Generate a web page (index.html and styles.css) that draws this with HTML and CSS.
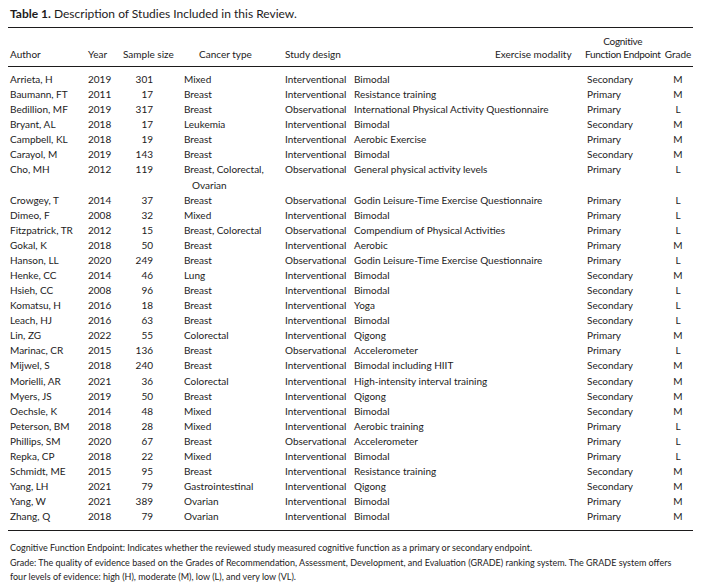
FILE: index.html
```html
<!DOCTYPE html>
<html lang="en">
<head>
<meta charset="utf-8">
<title>Table 1</title>
<link rel="stylesheet" href="styles.css">
</head>
<body>
<div class="doc">
  <div class="caption"><span class="label">Table 1.</span> Description of Studies Included in this Review.</div>
  <table class="studies">
    <colgroup>
      <col class="c-author"><col class="c-year"><col class="c-size"><col class="c-cancer"><col class="c-design"><col class="c-mod"><col class="c-end"><col class="c-grade">
    </colgroup>
    <thead>
      <tr>
        <th class="h-left">Author</th>
        <th class="h-left">Year</th>
        <th class="h-left">Sample size</th>
        <th class="h-cancer">Cancer type</th>
        <th class="h-left">Study design</th>
        <th class="h-mod">Exercise modality</th>
        <th class="h-end"><span class="stack">Cognitive<br>Function Endpoint</span></th>
        <th class="h-center">Grade</th>
      </tr>
    </thead>
    <tbody>
      <tr><td>Arrieta, H</td><td>2019</td><td class="num">301</td><td>Mixed</td><td>Interventional</td><td>Bimodal</td><td>Secondary</td><td class="grade">M</td></tr>
      <tr><td>Baumann, FT</td><td>2011</td><td class="num">17</td><td>Breast</td><td>Interventional</td><td>Resistance training</td><td>Primary</td><td class="grade">M</td></tr>
      <tr><td>Bedillion, MF</td><td>2019</td><td class="num">317</td><td>Breast</td><td>Observational</td><td>International Physical Activity Questionnaire</td><td>Primary</td><td class="grade">L</td></tr>
      <tr><td>Bryant, AL</td><td>2018</td><td class="num">17</td><td>Leukemia</td><td>Interventional</td><td>Bimodal</td><td>Secondary</td><td class="grade">M</td></tr>
      <tr><td>Campbell, KL</td><td>2018</td><td class="num">19</td><td>Breast</td><td>Interventional</td><td>Aerobic Exercise</td><td>Primary</td><td class="grade">M</td></tr>
      <tr><td>Carayol, M</td><td>2019</td><td class="num">143</td><td>Breast</td><td>Interventional</td><td>Bimodal</td><td>Secondary</td><td class="grade">M</td></tr>
      <tr><td>Cho, MH</td><td>2012</td><td class="num">119</td><td class="wrap">Breast, Colorectal,<br><span class="cont">Ovarian</span></td><td>Observational</td><td>General physical activity levels</td><td>Primary</td><td class="grade">L</td></tr>
      <tr><td>Crowgey, T</td><td>2014</td><td class="num">37</td><td>Breast</td><td>Observational</td><td>Godin Leisure-Time Exercise Questionnaire</td><td>Primary</td><td class="grade">L</td></tr>
      <tr><td>Dimeo, F</td><td>2008</td><td class="num">32</td><td>Mixed</td><td>Interventional</td><td>Bimodal</td><td>Primary</td><td class="grade">L</td></tr>
      <tr><td>Fitzpatrick, TR</td><td>2012</td><td class="num">15</td><td>Breast, Colorectal</td><td>Observational</td><td>Compendium of Physical Activities</td><td>Primary</td><td class="grade">L</td></tr>
      <tr><td>Gokal, K</td><td>2018</td><td class="num">50</td><td>Breast</td><td>Interventional</td><td>Aerobic</td><td>Primary</td><td class="grade">M</td></tr>
      <tr><td>Hanson, LL</td><td>2020</td><td class="num">249</td><td>Breast</td><td>Observational</td><td>Godin Leisure-Time Exercise Questionnaire</td><td>Primary</td><td class="grade">L</td></tr>
      <tr><td>Henke, CC</td><td>2014</td><td class="num">46</td><td>Lung</td><td>Interventional</td><td>Bimodal</td><td>Secondary</td><td class="grade">M</td></tr>
      <tr><td>Hsieh, CC</td><td>2008</td><td class="num">96</td><td>Breast</td><td>Interventional</td><td>Bimodal</td><td>Secondary</td><td class="grade">L</td></tr>
      <tr><td>Komatsu, H</td><td>2016</td><td class="num">18</td><td>Breast</td><td>Interventional</td><td>Yoga</td><td>Secondary</td><td class="grade">L</td></tr>
      <tr><td>Leach, HJ</td><td>2016</td><td class="num">63</td><td>Breast</td><td>Interventional</td><td>Bimodal</td><td>Secondary</td><td class="grade">L</td></tr>
      <tr><td>Lin, ZG</td><td>2022</td><td class="num">55</td><td>Colorectal</td><td>Interventional</td><td>Qigong</td><td>Primary</td><td class="grade">M</td></tr>
      <tr><td>Marinac, CR</td><td>2015</td><td class="num">136</td><td>Breast</td><td>Observational</td><td>Accelerometer</td><td>Primary</td><td class="grade">L</td></tr>
      <tr><td>Mijwel, S</td><td>2018</td><td class="num">240</td><td>Breast</td><td>Interventional</td><td>Bimodal including HIIT</td><td>Secondary</td><td class="grade">M</td></tr>
      <tr><td>Morielli, AR</td><td>2021</td><td class="num">36</td><td>Colorectal</td><td>Interventional</td><td>High-intensity interval training</td><td>Secondary</td><td class="grade">M</td></tr>
      <tr><td>Myers, JS</td><td>2019</td><td class="num">50</td><td>Breast</td><td>Interventional</td><td>Qigong</td><td>Secondary</td><td class="grade">M</td></tr>
      <tr><td>Oechsle, K</td><td>2014</td><td class="num">48</td><td>Mixed</td><td>Interventional</td><td>Bimodal</td><td>Secondary</td><td class="grade">M</td></tr>
      <tr><td>Peterson, BM</td><td>2018</td><td class="num">28</td><td>Mixed</td><td>Interventional</td><td>Aerobic training</td><td>Primary</td><td class="grade">L</td></tr>
      <tr><td>Phillips, SM</td><td>2020</td><td class="num">67</td><td>Breast</td><td>Observational</td><td>Accelerometer</td><td>Primary</td><td class="grade">L</td></tr>
      <tr><td>Repka, CP</td><td>2018</td><td class="num">22</td><td>Mixed</td><td>Interventional</td><td>Bimodal</td><td>Primary</td><td class="grade">L</td></tr>
      <tr><td>Schmidt, ME</td><td>2015</td><td class="num">95</td><td>Breast</td><td>Interventional</td><td>Resistance training</td><td>Secondary</td><td class="grade">M</td></tr>
      <tr><td>Yang, LH</td><td>2021</td><td class="num">79</td><td>Gastrointestinal</td><td>Interventional</td><td>Qigong</td><td>Secondary</td><td class="grade">M</td></tr>
      <tr><td>Yang, W</td><td>2021</td><td class="num">389</td><td>Ovarian</td><td>Interventional</td><td>Bimodal</td><td>Primary</td><td class="grade">M</td></tr>
      <tr><td>Zhang, Q</td><td>2018</td><td class="num">79</td><td>Ovarian</td><td>Interventional</td><td>Bimodal</td><td>Primary</td><td class="grade">M</td></tr>
    </tbody>
  </table>
  <div class="notes">
    <p>Cognitive Function Endpoint: Indicates whether the reviewed study measured cognitive function as a primary or secondary endpoint.</p>
    <p>Grade: The quality of evidence based on the Grades of Recommendation, Assessment, Development, and Evaluation (GRADE) ranking system. The GRADE system offers<br>four levels of evidence: high (H), moderate (M), low (L), and very low (VL).</p>
  </div>
</div>
</body>
</html>
```

FILE: styles.css
```css
html, body {
  margin: 0;
  padding: 0;
  background: #ffffff;
}

body {
  padding: 6px 8px 0 8px;
  font-family: "Lato", "Liberation Sans", sans-serif;
  color: #1d1b1c;
  font-size: 10px;
}

.doc {
  width: 685px;
}

.caption {
  font-size: 12px;
  line-height: 15px;
  padding: 0 2px 6px 2px;
  border-bottom: 1px solid #1d1b1c;
}

.caption .label {
  font-weight: 700;
}

.studies {
  width: 685px;
  table-layout: fixed;
  border-collapse: collapse;
  font-size: 10px;
}

.c-author { width: 78px; }
.c-year { width: 35px; }
.c-size { width: 61px; }
.c-cancer { width: 101px; }
.c-design { width: 69px; }
.c-mod { width: 233px; }
.c-end { width: 78px; }
.c-grade { width: 30px; }

.studies th {
  font-weight: 400;
  line-height: 13px;
  padding: 7px 0 5px 2px;
  vertical-align: bottom;
  white-space: nowrap;
  border-bottom: 1px solid #1d1b1c;
}

.studies .h-left { text-align: left; }
.studies .h-cancer { text-align: left; padding-left: 17px; }
.studies .h-mod { text-align: left; padding-left: 143px; }
.studies .h-center { text-align: center; padding-left: 0; }
.studies .h-end { text-align: right; padding-left: 0; padding-right: 5px; }

.stack {
  display: inline-block;
  text-align: center;
  letter-spacing: -0.3px;
}

.studies td {
  line-height: 15.08px;
  padding: 0 0 0 2px;
  vertical-align: top;
  white-space: nowrap;
  text-align: left;
}

.studies tbody tr:first-child td { padding-top: 5px; }
.studies tbody tr:last-child td { padding-bottom: 6px; }

.studies tbody {
  border-bottom: 1px solid #1d1b1c;
}

.studies td.num {
  text-align: right;
  padding-right: 29px;
}

.studies td.grade {
  text-align: center;
  padding-left: 0;
}

.studies .cont {
  padding-left: 8px;
}

.notes {
  padding: 10px 2px 0 2px;
  font-size: 9px;
  line-height: 14.5px;
}

.notes p {
  margin: 0;
  white-space: nowrap;
}
```
